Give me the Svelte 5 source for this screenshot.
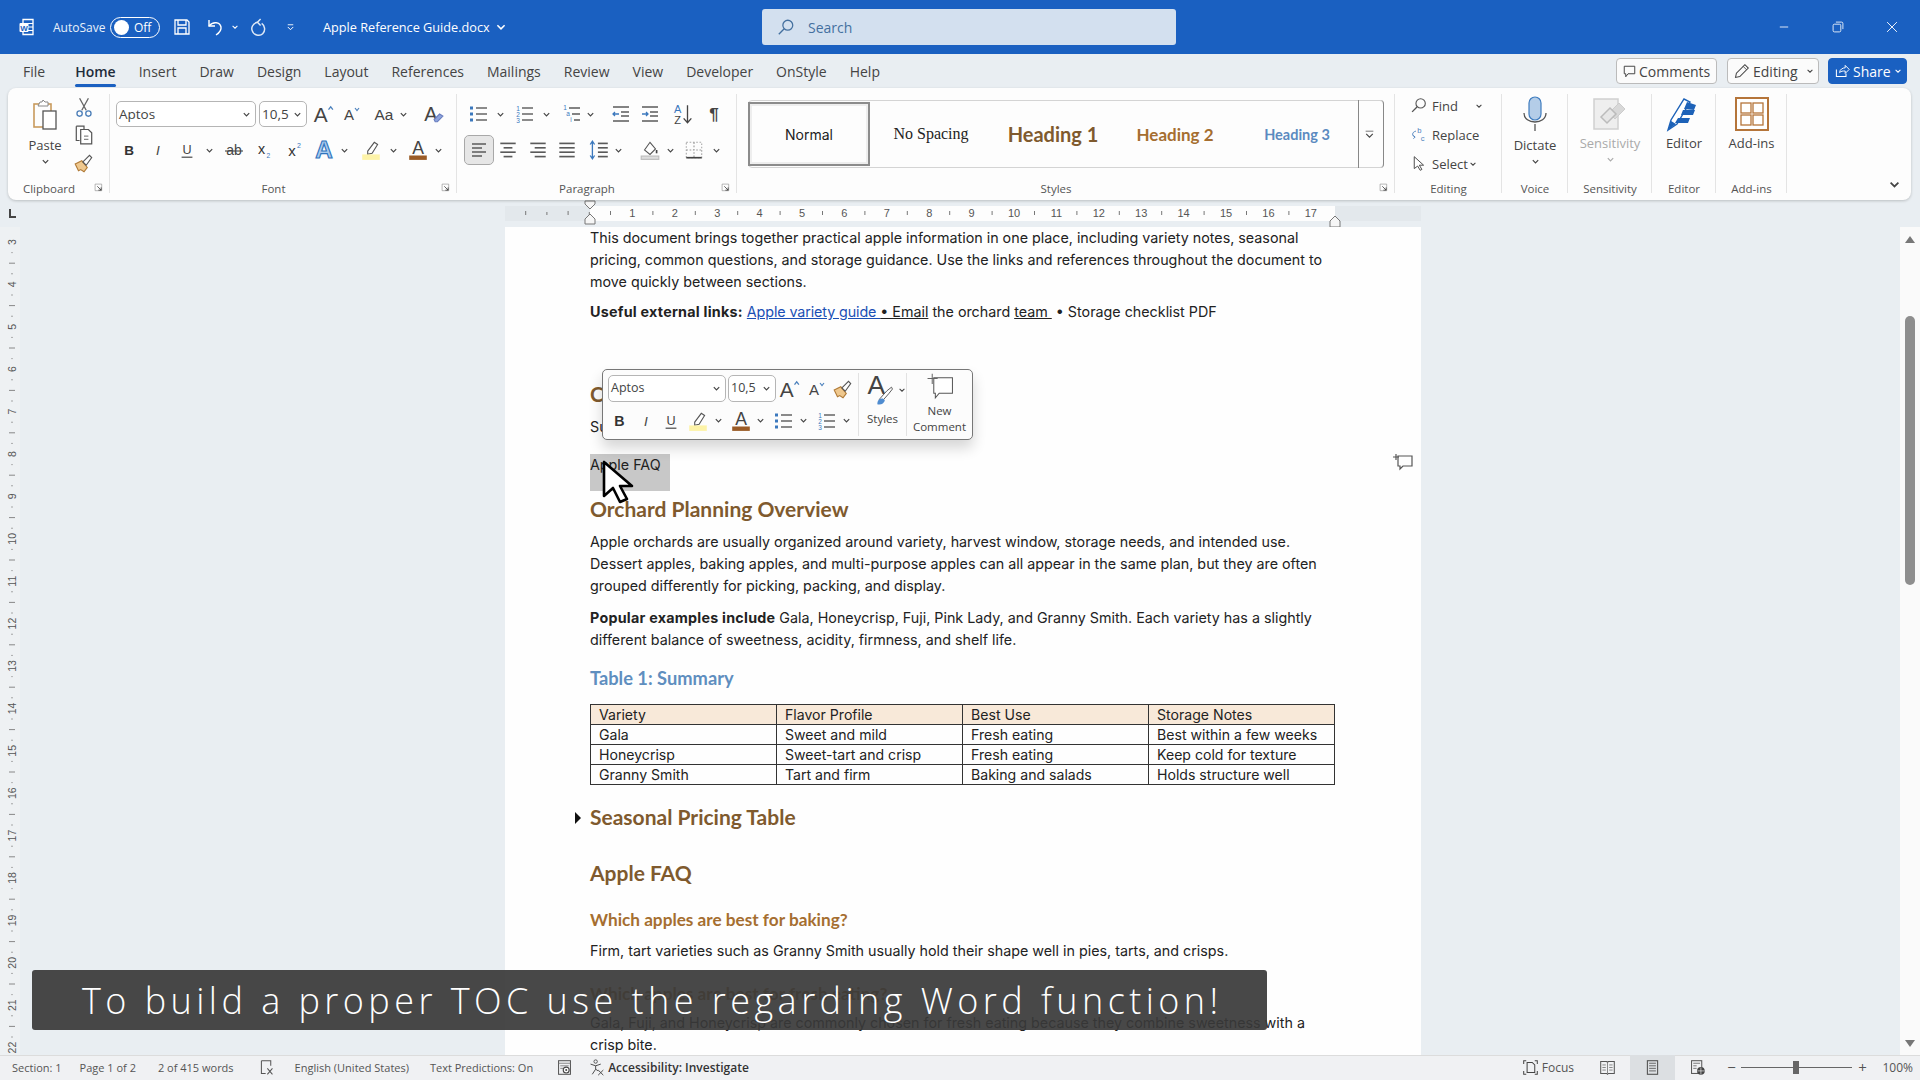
<script>
  const T = (s, x, y, size, fill = "#333", extra = "") =>
    `<text x="${x}" y="${y}" font-size="${size}" fill="${fill}" font-family="Liberation Sans, sans-serif" text-anchor="middle" ${extra}>${s}</text>`;
  const G = "#5a5a5a";
  const lines = (rows, color = G) =>
    rows.map(([a, y, b]) => `<path d="M${a} ${y}H${b}" stroke="${color}" stroke-width="1.5"/>`).join("");

  const icons = {
    chev: `<path d="M4 7l6 6 6-6" stroke="#444" stroke-width="2.6" fill="none"/>`,
    chevgray: `<path d="M4 7l6 6 6-6" stroke="#aaa" stroke-width="2.6" fill="none"/>`,
    chevw: `<path d="M4 7l6 6 6-6" stroke="#fff" stroke-width="2.6" fill="none"/>`,
    word: `<path d="M6 2.5h10v15H6z" fill="none" stroke="#fff" stroke-width="1.3"/><path d="M11 6.5h5M11 10h5M11 13.5h5" stroke="#fff"/><rect x="2.5" y="6" width="9" height="9" rx="1" fill="#fff"/>${T("W", 7, 13.5, 8, "#185fc0", 'font-weight="700"')}`,
    save: `<path d="M3 3h12l2 2v12H3z" fill="none" stroke="#fff" stroke-width="1.3"/><path d="M6 3v5h8V3M6 17v-6h8v6" fill="none" stroke="#fff" stroke-width="1.3"/>`,
    undo: `<path d="M4 3v6h6" fill="none" stroke="#fff" stroke-width="1.4"/><path d="M4 9c4-5 11-4 12 1 .5 3-2 6-5 8" fill="none" stroke="#fff" stroke-width="1.4"/>`,
    redo: `<path d="M12 2l-3 3 3 3" fill="none" stroke="#dfe9f6" stroke-width="1.4"/><path d="M9 5C4 6 3 11 4 13c1 4 7 6 10 3 3-3 2-8-1-10" fill="none" stroke="#dfe9f6" stroke-width="1.4"/>`,
    custom: `<path d="M5 5h10" stroke="#fff" stroke-width="1.6"/><path d="M5 9l5 5 5-5" fill="none" stroke="#fff" stroke-width="1.8"/>`,
    search: `<circle cx="12" cy="8" r="5.5" fill="none" stroke="#44709f" stroke-width="1.4"/><path d="M8 12l-6 6" stroke="#44709f" stroke-width="1.5"/>`,
    min: `<path d="M4 10h12" stroke="#fff" stroke-width="1.2"/>`,
    restore: `<rect x="3" y="6" width="11" height="11" rx="2" fill="none" stroke="#fff" stroke-width="1.2"/><path d="M7 3h8a2 2 0 0 1 2 2v8" fill="none" stroke="#fff" stroke-width="1.2"/>`,
    close: `<path d="M3 3l14 14M17 3L3 17" stroke="#fff" stroke-width="1.3"/>`,
    bubble: `<path d="M3 3h14v10H8l-3 4v-4H3z" fill="none" stroke="#444" stroke-width="1.3"/>`,
    pencil: `<path d="M3 17l1-5L14 2l4 4L8 16z" fill="none" stroke="#444" stroke-width="1.2"/><path d="M12 4l4 4" stroke="#444"/>`,
    share: `<path d="M3 8v9h12v-4" fill="none" stroke="#fff" stroke-width="1.3"/><path d="M7 12c0-4 4-6 7-6V3l5 5-5 5v-3c-3 0-5 0-7 2z" fill="none" stroke="#fff" stroke-width="1.2"/>`,
    paste: `<rect x="4" y="5" width="17" height="23" fill="none" stroke="#c89a5c" stroke-width="1.6"/><path d="M9 5l1-2h2l1-2 2 2 3 0v4H8z" fill="#fff" stroke="#888"/><rect x="13" y="12" width="13" height="18" fill="#fff" stroke="#555" stroke-width="1.3"/>`,
    cut: `<path d="M6 2l6 11M14 2L8 13" stroke="#666" stroke-width="1.2"/><circle cx="6" cy="16" r="2.4" fill="none" stroke="#4d7fb8" stroke-width="1.2"/><circle cx="14" cy="16" r="2.4" fill="none" stroke="#4d7fb8" stroke-width="1.2"/>`,
    copy: `<path d="M3 2h7v3M3 2v13h3" fill="none" stroke="#555" stroke-width="1.1"/><path d="M7 5h7l3 3v10H7z" fill="#fff" stroke="#555" stroke-width="1.1"/><path d="M10 11h4M10 14h4" stroke="#888"/>`,
    painter: `<path d="M2 11l6-3 5 6-3 4-3-2-2 1z" fill="#efc88e" stroke="#b07a36"/><path d="M9 9l6-6 2 2-5 7z" fill="#fff" stroke="#555"/>`,
    launch: `<path d="M2 2h12v12H2z" fill="none" stroke="#888" stroke-width="1.1"/><path d="M6 6l7 7M13 8v5H8" fill="none" stroke="#333" stroke-width="1.4"/>`,
    grow: T("A", 8, 17, 19, "#444") + `<path d="M15 6l2-2.5L19 6" fill="none" stroke="#4d82bd" stroke-width="1.2"/>`,
    shrink: T("A", 8, 16, 15, "#444") + `<path d="M14 4l2 2.5L18 4" fill="none" stroke="#4d82bd" stroke-width="1.2"/>`,
    aa: T("Aa", 10, 15, 14, "#444"),
    clear: T("A", 8, 16, 18, "#444") + `<path d="M11 15l5-5 3 2-5 5h-2z" fill="#8ea4dc" stroke="#6a7fc0"/>`,
    bold: T("B", 10, 16, 15, "#333", 'font-weight="700"'),
    italic: T("I", 10, 16, 15, "#444", 'font-style="italic"'),
    under: T("U", 10, 14, 14, "#444") + `<path d="M4 18h12" stroke="#444" stroke-width="1.3"/>`,
    strike: T("ab", 10, 15, 14, "#444") + `<path d="M1 11h18" stroke="#444" stroke-width="1.1"/>`,
    sub: T("x", 8, 14, 15, "#333") + T("2", 15, 18, 7, "#3b78bd"),
    sup: T("x", 8, 16, 15, "#333") + T("2", 15, 8, 7, "#3b78bd"),
    fx: T("A", 10, 17, 22, "#a9cbee", 'font-weight="700" stroke="#2f74bd" stroke-width="1"'),
    hl: `<path d="M7 11l6-8 3 2-5 8-4 1z" fill="#fff" stroke="#555"/><rect x="2" y="14" width="16" height="5" fill="#fdf3a8"/>`,
    color: T("A", 10, 14, 16, "#444") + `<rect x="2" y="15" width="16" height="4" fill="#9a5b26"/>`,
    bullets: [4, 10, 16].map((y) => `<rect x="2" y="${y - 1.5}" width="3" height="3" fill="#3b78bd"/><path d="M8 ${y}H19" stroke="${G}" stroke-width="1.4"/>`).join(""),
    nums: [4, 10, 16].map((y, i) => T(i + 1, 4, y + 2.5, 6.5, "#3b78bd") + `<path d="M8 ${y}H19" stroke="${G}" stroke-width="1.4"/>`).join(""),
    multi: T("1", 4, 6, 6.5, "#3b78bd") + T("a", 7, 12, 6.5, "#3b78bd") + T("i", 10, 18, 6.5, "#3b78bd") + lines([[8, 4, 19], [11, 10, 19], [13, 16, 19]]),
    outdent: lines([[2, 3, 18], [10, 8, 18], [10, 12, 18], [2, 17, 18]]) + `<path d="M8 10H2M4 8l-2 2 2 2" fill="none" stroke="#3b78bd" stroke-width="1.3"/>`,
    indent: lines([[2, 3, 18], [10, 8, 18], [10, 12, 18], [2, 17, 18]]) + `<path d="M2 10h6M6 8l2 2-2 2" fill="none" stroke="#3b78bd" stroke-width="1.3"/>`,
    sort: T("A", 6, 9, 10, "#3b78bd") + T("Z", 6, 19, 10, "#444") + `<path d="M15 2v16M11.500 14l3.500 4 3.500-4" fill="none" stroke="#444" stroke-width="1.2"/>`,
    pil: T("¶", 10, 16, 17, "#444", 'font-weight="700"'),
    al: lines([[3, 4, 17], [3, 8, 13], [3, 12, 17], [3, 16, 13]]),
    ac: lines([[3, 4, 17], [6, 8, 14], [3, 12, 17], [6, 16, 14]]),
    ar: lines([[3, 4, 17], [7, 8, 17], [3, 12, 17], [7, 16, 17]]),
    aj: lines([[3, 4, 17], [3, 8, 17], [3, 12, 17], [3, 16, 17]]),
    spacing: lines([[9, 4, 18], [9, 8, 18], [9, 12, 18], [9, 16, 18]]) + `<path d="M4 2v16M2 5l2-3 2 3M2 15l2 3 2-3" fill="none" stroke="#3b78bd" stroke-width="1.2"/>`,
    shade: `<path d="M5 10l5-7 5 6-5 5z" fill="#fff" stroke="#555"/><path d="M16 10v3" stroke="#444" stroke-width="1.5"/><rect x="2" y="15.500" width="16" height="3" fill="#ddd" stroke="#bbb"/>`,
    borders: `<rect x="3" y="3" width="14" height="14" fill="none" stroke="#aaa" stroke-dasharray="1.500 1.500"/><path d="M10 3v14M3 10h14" stroke="#999" stroke-dasharray="1.500 1.500"/><path d="M3 17h14" stroke="#444" stroke-width="1.5"/>`,
    up2: `<path d="M3 4h14" stroke="#444" stroke-width="1.3"/><path d="M4 9l6 6 6-6" fill="none" stroke="#444" stroke-width="2"/>`,
    find: `<circle cx="12.500" cy="7.500" r="5.500" fill="none" stroke="#555" stroke-width="1.3"/><path d="M8.500 11.500l-6 6" stroke="#555" stroke-width="1.600"/>`,
    replace: T("b", 11, 8, 9, "#4f82bd") + T("c", 15, 18, 9, "#4f82bd") + `<path d="M7 6C2 7 2 12 6 13M4 11l2 2-2 2" fill="none" stroke="#4f82bd" stroke-width="1.100"/>`,
    select: `<path d="M5 2v14l4-3 3 5 2-1-3-5h5z" fill="#fff" stroke="#444" stroke-width="1.100"/>`,
    mic: `<rect x="12" y="1" width="12" height="23" rx="6" fill="#b4cde8" stroke="#3f7cbf" stroke-width="1.200"/><path d="M7 17c0 12 22 12 22 0" fill="none" stroke="#555" stroke-width="1.300"/><path d="M18 28v7" stroke="#555" stroke-width="1.300"/>`,
    sens: `<rect x="2" y="3" width="24" height="30" fill="#eee" stroke="#d0d0d0" stroke-width="1.500"/><path d="M17 17l10-10 6 6-10 10z" fill="#d8d8d8" stroke="#ccc"/><path d="M9 21l9-9 6 6-9 9z" fill="#e6e6e6" stroke="#bbb" stroke-width="1.500"/>`,
    editor: `<path d="M2 34l3-10L18 3l6 3-13 22z" fill="#fff" stroke="#1d62b8" stroke-width="1.400"/><path d="M21 6l9 3-2 5-10-1zM17 14h12l-2 5H15zM12 22h12l-2 5H9z" fill="#1d62b8"/><path d="M2 34l3-9 5 3z" fill="#1d62b8"/>`,
    addins: `<rect x="2" y="2" width="32" height="32" fill="#fff" stroke="#b5753a" stroke-width="2"/><rect x="7" y="7" width="10" height="10" fill="none" stroke="#b5753a" stroke-width="1.300"/><rect x="19" y="7" width="10" height="10" fill="none" stroke="#b5753a" stroke-width="1.300"/><rect x="7" y="19" width="10" height="10" fill="none" stroke="#b5753a" stroke-width="1.300"/><rect x="19" y="19" width="10" height="10" fill="none" stroke="#b5753a" stroke-width="1.300"/>`,
    styles: T("A", 11, 22, 28, "#444") + `<path d="M14 28l8-9 5-4 1 2-4 5-7 8z" fill="#fff" stroke="#555"/><path d="M12 33c0-5 3-6 6-6l2 2c-1 3-4 5-8 4z" fill="#4f8cd0"/>`,
    newc: `<path d="M10 6h24v20H17l-5 6v-6h-2z" fill="#fff" stroke="#555" stroke-width="1.300"/><path d="M8 1v13M2 7h13" stroke="#666" stroke-width="1.300"/>`,
    sbook: `<path d="M2 3h7l1 1 1-1h7v14h-7l-1 1-1-1H2z" fill="none" stroke="#555" stroke-width="1.200"/><path d="M10 4v13M4 7h4M4 10h4M4 13h4M12 7h4M12 10h4M12 13h4" stroke="#777"/>`,
    sprint: `<rect x="4" y="2" width="12" height="16" fill="none" stroke="#555" stroke-width="1.300"/><path d="M6 5h8M6 8h8M6 11h8M6 14h8" stroke="#555"/>`,
    sweb: `<rect x="3" y="2" width="12" height="15" fill="none" stroke="#555" stroke-width="1.200"/><path d="M5 5h8M5 8h4M5 11h4" stroke="#666"/><circle cx="14" cy="14" r="4.500" fill="#444"/><path d="M10 14h8M14 10v8" stroke="#fff" stroke-width=".7"/>`,
    focus: `<path d="M2 6V2h3M15 2h3v4M18 14v4h-3M5 18H2v-4" fill="none" stroke="#444" stroke-width="1.200"/><path d="M6 4h6l3 3v9H6z" fill="none" stroke="#444" stroke-width="1.200"/>`,
    proof: `<path d="M4 2h11v6M4 2v15h5" fill="none" stroke="#555" stroke-width="1.200"/><path d="M11 11l6 7M17 11l-6 7" stroke="#555" stroke-width="1.200"/>`,
    macro: `<rect x="3" y="2" width="14" height="16" fill="none" stroke="#555" stroke-width="1.200"/><path d="M3 5h14M5 8h10M5 11h4" stroke="#777"/><circle cx="12" cy="13" r="3.500" fill="#fff" stroke="#444" stroke-width="1.300"/><circle cx="12" cy="13" r="1.200" fill="#444"/>`,
    access: `<circle cx="9" cy="3" r="2" fill="none" stroke="#444"/><path d="M3 6l6 2 6-2M9 8v4l-4 6M9 12l3 2" fill="none" stroke="#444" stroke-width="1.100"/><path d="M12 13l6 6M18 13l-6 6" stroke="#444" stroke-width="1.100"/>`,
    cmark: `<path d="M4 3h14v10H9l-3 3v-3H4z" fill="none" stroke="#555" stroke-width="1.200"/><path d="M2 1v6M-1 4h6" stroke="#555" stroke-width="1.200"/>`,
  };

  // lays icons out by centre x, as flow items with a left margin worked out from the previous one
  function place(start, list) {
    let x = start;
    return list.map(([ic, c, s, act]) => {
      const m = c - s / 2 - x;
      x = c + s / 2;
      return { ic, s, m, act };
    });
  }

  const fontTop = place(307, [["grow", 323, 22], ["shrink", 351, 20], ["aa", 384, 22], ["chev", 403, 9], ["clear", 433, 22]]);
  const fontBot = place(115, [["bold", 129, 18], ["italic", 158, 18], ["under", 187, 18], ["chev", 209, 9], ["strike", 234, 20], ["sub", 263, 19], ["sup", 294, 20], ["fx", 324, 22], ["chev", 344, 9], ["hl", 371, 22], ["chev", 393, 9], ["color", 418, 22], ["chev", 438, 9]]);
  const paraTop = place(457, [["bullets", 478, 20], ["chev", 500, 9], ["nums", 524, 20], ["chev", 546, 9], ["multi", 571, 20], ["chev", 590, 9], ["outdent", 621, 20], ["indent", 650, 20], ["sort", 682, 22], ["pil", 714, 20]]);
  const paraBot = place(457, [["al", 479, 28, true], ["ac", 508, 22], ["ar", 538, 22], ["aj", 567, 22], ["spacing", 599, 22], ["chev", 618, 9], ["shade", 650, 22], ["chev", 670, 9], ["borders", 694, 22], ["chev", 716, 9]]);
  const miniTop = place(776, [["grow", 789, 22], ["shrink", 816, 20], ["painter", 843, 22]]);
  const miniBot = place(608, [["bold", 619, 19], ["italic", 646, 18], ["under", 671, 18], ["hl", 698, 22], ["chev", 718, 9], ["color", 741, 22], ["chev", 760, 9], ["bullets", 783, 20], ["chev", 803, 9], ["nums", 826, 20], ["chev", 846, 9]]);
  const small = [["cut", 22], ["copy", 22], ["painter", 22]];

  const tabs = ["File", "Home", "Insert", "Draw", "Design", "Layout", "References", "Mailings", "Review", "View", "Developer", "OnStyle", "Help"];
  const gallery = [
    { name: "Normal", cls: "normal" },
    { name: "No Spacing", cls: "nospace" },
    { name: "Heading 1", cls: "h1s" },
    { name: "Heading 2", cls: "h2s" },
    { name: "Heading 3", cls: "h3s" },
  ];
  const rows = [
    ["Variety", "Flavor Profile", "Best Use", "Storage Notes"],
    ["Gala", "Sweet and mild", "Fresh eating", "Best within a few weeks"],
    ["Honeycrisp", "Sweet-tart and crisp", "Fresh eating", "Keep cold for texture"],
    ["Granny Smith", "Tart and firm", "Baking and salads", "Holds structure well"],
  ];

  const cm = 42.4;
  const hNums = Array.from({ length: 17 }, (_, i) => i + 1);
  const vNums = Array.from({ length: 22 }, (_, i) => i + 1).filter((n) => n >= 3);
</script>

{#snippet tools(list)}
  {#each list as t}
    <svg
      class="tool"
      class:active={t.act}
      style="margin-left:{t.m}px"
      width={t.s}
      height={t.s}
      viewBox={t.act ? "-4 -4 28 28" : "0 0 20 20"}>{@html icons[t.ic]}</svg>
  {/each}
{/snippet}

{#snippet icon(name, w, h = w, box = "0 0 20 20")}
  <svg class="icon" width={w} height={h} viewBox={box}>{@html icons[name]}</svg>
{/snippet}

{#snippet combo(cls, text)}
  <div class="combo {cls}"><span>{text}</span>{@render icon("chev", 9)}</div>
{/snippet}

{#snippet label(text, launcher = true)}
  <div class="glabel"><span>{text}</span>{#if launcher}{@render icon("launch", 11)}{/if}</div>
{/snippet}

<div class="app">
  <header class="titlebar">
    <div class="word">{@render icon("word", 20)}</div>
    <span class="autosave">AutoSave</span>
    <div class="toggle"><i></i><span>Off</span></div>
    <div class="qat">
      {@render icon("save", 20)}
      {@render icon("undo", 20)}
      {@render icon("chevw", 8)}
      {@render icon("redo", 21)}
      {@render icon("custom", 11)}
    </div>
    <div class="docname">Apple Reference Guide.docx {@render icon("chevw", 12)}</div>
    <div class="search">{@render icon("search", 18)}<span>Search</span></div>
    <div class="winctl">
      {@render icon("min", 14)}
      {@render icon("restore", 14)}
      {@render icon("close", 14)}
    </div>
  </header>

  <nav class="tabs">
    {#each tabs as tab}
      <span class="tab" class:current={tab === "Home"}>{tab}</span>
    {/each}
    <div class="actions">
      <div class="pill comments">{@render icon("bubble", 15)}Comments</div>
      <div class="pill editing">{@render icon("pencil", 17)}Editing{@render icon("chev", 8)}</div>
      <div class="pill share">{@render icon("share", 16)}Share{@render icon("chevw", 8)}</div>
    </div>
  </nav>

  <section class="ribbon">
    <div class="group clipboard">
      <div class="gbody cliprow">
        <div class="paste">
          {@render icon("paste", 30, 34, "0 0 30 32")}
          <span>Paste</span>
          {@render icon("chev", 9)}
        </div>
        <div class="smallcol">
          {#each small as [n, s]}{@render icon(n, s)}{/each}
        </div>
      </div>
      {@render label("Clipboard")}
    </div>

    <div class="group font">
      <div class="gbody">
        <div class="row">
          {@render combo("fname", "Aptos")}
          {@render combo("fsize", "10,5")}
          {@render tools(fontTop)}
        </div>
        <div class="row">{@render tools(fontBot)}</div>
      </div>
      {@render label("Font")}
    </div>

    <div class="group para">
      <div class="gbody">
        <div class="row nopad">{@render tools(paraTop)}</div>
        <div class="row nopad">{@render tools(paraBot)}</div>
      </div>
      {@render label("Paragraph")}
    </div>

    <div class="group stylesg">
      <div class="gbody">
        <div class="gallery">
          {#each gallery as g}
            <div class="gitem {g.cls}">{g.name}</div>
          {/each}
          <div class="gmore">{@render icon("up2", 11)}</div>
        </div>
      </div>
      {@render label("Styles")}
    </div>

    <div class="group editing-g">
      <div class="gbody editrows">
        <div class="erow">{@render icon("find", 17)}<span>Find</span><em class="c1">{@render icon("chev", 8)}</em></div>
        <div class="erow">{@render icon("replace", 17)}<span>Replace</span></div>
        <div class="erow">{@render icon("select", 17)}<span>Select</span><em>{@render icon("chev", 8)}</em></div>
      </div>
      {@render label("Editing", false)}
    </div>

    <div class="group big g-voice">
      <div class="gbody bigbody">
        {@render icon("mic", 36, 36, "0 0 36 36")}
        <span>Dictate</span>
        {@render icon("chev", 9)}
      </div>
      {@render label("Voice", false)}
    </div>

    <div class="group big g-sens">
      <div class="gbody bigbody off tight">
        {@render icon("sens", 36, 36, "0 0 36 36")}
        <span>Sensitivity</span>
        {@render icon("chevgray", 9)}
      </div>
      {@render label("Sensitivity", false)}
    </div>

    <div class="group big g-editor">
      <div class="gbody bigbody tight">
        {@render icon("editor", 36, 36, "0 0 36 36")}
        <span>Editor</span>
      </div>
      {@render label("Editor", false)}
    </div>

    <div class="group big g-add">
      <div class="gbody bigbody tight">
        {@render icon("addins", 36, 36, "0 0 36 36")}
        <span>Add-ins</span>
      </div>
      {@render label("Add-ins", false)}
    </div>

    <div class="collapse">{@render icon("chev", 13)}</div>
  </section>

  <div class="rulerbar">
    <svg width="1920" height="27" viewBox="0 0 1920 27">
      <path d="M10 9v8h6" fill="none" stroke="#444" stroke-width="2" />
      <rect x="505" y="6" width="916" height="15" fill="#e3e8ec" />
      <rect x="590" y="6" width="745" height="15" fill="#fdfdfd" />
      {#each Array(37) as _, i}
        {@const x = 505 + (i * cm) / 2 - 0.5}
        <path d="M{x + 21.200} {i % 2 ? 12 : 11}v{i % 2 ? 3 : 4}" stroke="#777" />
      {/each}
      {#each hNums as n}
        <rect x={590 + n * cm - 6} y="7" width="12" height="13" fill="#fdfdfd" />
        <text x={590 + n * cm} y="17" font-size="11" text-anchor="middle" fill="#555" font-family="Liberation Sans, sans-serif">{n}</text>
      {/each}
      <path d="M585 1h10v3l-5 5-5-5zM585 24v-5l5-5 5 5v5z" fill="#f6f6f6" stroke="#777" />
      <path d="M1330 21l5-5 5 5v6h-10z" fill="#f6f6f6" stroke="#777" />
    </svg>
  </div>

  <div class="workspace">
    <aside class="vruler">
      <svg width="20" height="828" viewBox="0 0 20 828">
        {#each vNums as n}
          <text x="0" y="0" transform="translate(16 {242 + (n - 3) * cm - 227}) rotate(-90)" font-size="10.500" text-anchor="middle" fill="#555" font-family="Liberation Sans, sans-serif">{n}</text>
          <path d="M9 {242 + (n - 3) * cm - 227 + cm / 2}h6" stroke="#888" />
          <circle cx="12" cy={242 + (n - 3) * cm - 227 + cm / 4} r=".7" fill="#888" />
          <circle cx="12" cy={242 + (n - 3) * cm - 227 + (3 * cm) / 4} r=".7" fill="#888" />
        {/each}
      </svg>
    </aside>

    <main class="canvas">
      <article class="page">
        <p>This document brings together practical apple information in one place, including variety notes, seasonal pricing, common questions, and storage guidance. Use the links and references throughout the document to move quickly between sections.</p>
        <p class="links"><b>Useful external links:</b> <a href="#guide">Apple variety guide&nbsp;</a><u>•&nbsp;Email</u> the orchard <u>team&nbsp;</u> •&nbsp;Storage checklist PDF</p>
        <h2 class="contents">Contents</h2>
        <p class="toc">Summary Table</p>
        <p class="toc sel"><mark>Apple FAQ</mark></p>
        <h2 class="orchard">Orchard Planning Overview</h2>
        <p>Apple orchards are usually organized around variety, harvest window, storage needs, and intended use. Dessert apples, baking apples, and multi-purpose apples can all appear in the same plan, but they are often grouped differently for picking, packing, and display.</p>
        <p class="pop"><b>Popular examples include</b> Gala, Honeycrisp, Fuji, Pink Lady, and Granny Smith. Each variety has a slightly different balance of sweetness, acidity, firmness, and shelf life.</p>
        <h4 class="tblh">Table 1: Summary</h4>
        <table>
          <tbody>
            {#each rows as r, i}
              <tr class:head={i === 0}>
                {#each r as c}<td>{c}</td>{/each}
              </tr>
            {/each}
          </tbody>
        </table>
        <h2 class="pricing">Seasonal Pricing Table</h2>
        <h2 class="faq">Apple FAQ</h2>
        <h3 class="q1">Which apples are best for baking?</h3>
        <p class="a1">Firm, tart varieties such as Granny Smith usually hold their shape well in pies, tarts, and crisps.</p>
        <h3 class="q2">Which apples are best for fresh eating?</h3>
        <p class="a2">Gala, Fuji, and Honeycrisp are commonly chosen for fresh eating because they combine sweetness with a crisp bite.</p>

        <div class="mini">
          <div class="minileft">
            <div class="minirow">
              {@render combo("mname", "Aptos")}
              {@render combo("msize", "10,5")}
              {@render tools(miniTop)}
            </div>
            <div class="minirow second">{@render tools(miniBot)}</div>
          </div>
          <div class="ministyles">
            <div class="msrow">{@render icon("styles", 34, 34, "0 0 36 36")}{@render icon("chev", 8)}</div>
            <span>Styles</span>
          </div>
          <div class="minicomment">
            {@render icon("newc", 28, 28, "0 0 36 36")}
            <span>New<br />Comment</span>
          </div>
        </div>

        <svg class="fold" width="8" height="14" viewBox="0 0 8 14"><path d="M1 1l6 6-6 6z" fill="#111" /></svg>
        <svg class="cmark" width="22" height="20" viewBox="-2 0 22 20">{@html icons.cmark}</svg>
      </article>
      <svg class="cursor" width="34" height="44" viewBox="0 0 34 44">
        <path d="M2 2v34l9-8 7 14 7-3-7-13h12z" fill="#fff" stroke="#000" stroke-width="2.600" stroke-linejoin="round" />
      </svg>
    </main>

    <aside class="scroll">
      <svg width="10" height="8" viewBox="0 0 10 8"><path d="M0 8l5-7 5 7z" fill="#777" /></svg>
      <div class="thumb"></div>
      <svg class="down" width="10" height="8" viewBox="0 0 10 8"><path d="M0 0l5 7 5-7z" fill="#777" /></svg>
    </aside>
  </div>

  <footer class="status">
    <span>Section: 1</span>
    <span class="pg">Page 1 of 2</span>
    <span class="wd">2 of 415 words</span>
    <span class="si">{@render icon("proof", 17)}</span>
    <span class="lang">English (United States)</span>
    <span class="pred">Text Predictions: On</span>
    <span class="si2">{@render icon("macro", 17)}</span>
    <span class="acc">{@render icon("access", 17)}<b>Accessibility: Investigate</b></span>
    <div class="sright">
      <span class="fo">{@render icon("focus", 17)}Focus</span>
      <span class="view">{@render icon("sbook", 17)}</span>
      <span class="view on">{@render icon("sprint", 17)}</span>
      <span class="view">{@render icon("sweb", 17)}</span>
      <span class="zbtn">−</span>
      <div class="slider"><i></i></div>
      <span class="zbtn">+</span>
      <span class="pct">100%</span>
    </div>
  </footer>

  <div class="caption">To build a proper TOC use the regarding Word function!</div>
</div>

<style>
  :global(body) {
    margin: 0;
    background: #e9eef2;
  }

  .app {
    position: relative;
    width: 1920px;
    height: 1080px;
    overflow: hidden;
    display: flex;
    flex-direction: column;
    background: #e9eef2;
    font-family: "Open Sans", sans-serif;
    color: #444;
  }

  svg {
    display: block;
    flex: none;
  }

  .titlebar {
    height: 54px;
    flex: none;
    display: flex;
    align-items: center;
    background: #1a60c1;
    color: #fff;
    font-size: 12px;
  }
  .word {
    margin-left: 17px;
  }
  .autosave {
    margin-left: 16px;
    width: 57px;
    color: #e8f0fa;
  }
  .toggle {
    width: 50px;
    height: 21px;
    box-sizing: border-box;
    border: 1px solid #fff;
    border-radius: 11px;
    display: flex;
    align-items: center;
    gap: 5px;
    padding-left: 3px;
  }
  .toggle i {
    width: 15px;
    height: 15px;
    border-radius: 50%;
    background: #fff;
  }
  .qat {
    display: flex;
    align-items: center;
    margin-left: 12px;
    gap: 13px;
  }
  .qat :global(svg:nth-child(3)) {
    margin-left: -7px;
  }
  .qat :global(svg:nth-child(4)) {
    margin-left: -4px;
  }
  .qat :global(svg:nth-child(5)) {
    margin-left: 3px;
  }
  .docname {
    margin-left: 27px;
    width: 440px;
    font-size: 12.7px;
    display: flex;
    align-items: center;
    gap: 5px;
    white-space: nowrap;
  }
  .search {
    position: absolute;
    left: 762px;
    top: 9px;
    width: 414px;
    height: 36px;
    box-sizing: border-box;
    background: #d3e0ef;
    border-radius: 3px;
    display: flex;
    align-items: center;
    padding-left: 15px;
    gap: 13px;
    color: #44709f;
    font-size: 14px;
  }
  .winctl {
    margin-left: auto;
    display: flex;
    gap: 40px;
    margin-right: 21px;
  }

  .tabs {
    height: 34px;
    flex: none;
    box-sizing: border-box;
    padding-top: 2px;
    display: flex;
    align-items: center;
    padding-left: 23px;
    gap: 23px;
    font-size: 14px;
    color: #444;
  }
  .tab {
    position: relative;
    line-height: 22px;
  }
  .tab:first-child {
    margin-right: 7px;
  }
  .tab.current {
    font-weight: 600;
    color: #1d2b3a;
  }
  .tab.current::after {
    content: "";
    position: absolute;
    left: 0;
    right: 0;
    bottom: -4px;
    height: 3px;
    background: #1a60c1;
    border-radius: 2px;
  }
  .actions {
    margin-left: auto;
    margin-right: 13px;
    margin-top: -2px;
    display: flex;
    gap: 10px;
  }
  .pill {
    height: 26px;
    box-sizing: border-box;
    border: 1px solid #bbb;
    border-radius: 4px;
    background: #fbfbfb;
    display: flex;
    align-items: center;
    gap: 3px;
    font-size: 14px;
    color: #444;
    padding: 0 5px;
  }
  .comments {
    width: 101px;
    padding-left: 5px;
    gap: 2px;
    margin-left: -1px;
  }
  .editing {
    width: 92px;
  }
  .editing :global(svg:last-child) {
    margin-left: 5px;
  }
  .share {
    width: 79px;
    background: #1a60c1;
    border-color: #1a60c1;
    color: #fff;
    margin-left: -1px;
  }

  .ribbon {
    position: relative;
    height: 112px;
    flex: none;
    margin: 0 9px 0 8px;
    background: #fdfdfd;
    border-radius: 8px;
    box-shadow: 0 1px 3px rgba(0, 0, 0, 0.2);
    display: flex;
  }
  .group {
    position: relative;
    display: flex;
    flex-direction: column;
    box-sizing: border-box;
    height: 100%;
    padding-top: 12px;
  }
  .group::after {
    content: "";
    position: absolute;
    right: 0;
    top: 6px;
    bottom: 7px;
    width: 1px;
    background: #e4e4e4;
  }
  .gbody {
    height: 74px;
    flex: none;
  }
  .glabel {
    flex: none;
    height: 26px;
    display: flex;
    align-items: center;
    font-size: 11.5px;
    color: #555;
    padding-top: 1px;
  }
  .glabel span {
    flex: 1;
    text-align: center;
  }
  .glabel :global(svg) {
    width: 11px;
    margin: 0 5px 0 4px;
  }
  .clipboard {
    width: 102px;
  }
  .font {
    width: 347px;
  }
  .para {
    width: 280px;
  }
  .stylesg {
    width: 658px;
  }
  .editing-g {
    width: 107px;
  }
  .g-voice {
    width: 66px;
  }
  .g-sens {
    width: 84px;
  }
  .g-editor {
    width: 64px;
  }
  .g-add {
    width: 71px;
  }

  .cliprow {
    display: flex;
  }
  .paste {
    width: 74px;
    margin-top: -2px;
    display: flex;
    flex-direction: column;
    align-items: center;
    font-size: 13px;
  }
  .paste span {
    margin-top: 4px;
    line-height: 18px;
  }
  .paste :global(svg:last-child) {
    margin-top: 3px;
  }
  .smallcol {
    display: flex;
    flex-direction: column;
    gap: 6px;
    margin-left: -9px;
    margin-top: -4px;
  }

  .row {
    display: flex;
    align-items: center;
    height: 28px;
    padding-left: 6px;
    box-sizing: border-box;
  }
  .row + .row {
    margin-top: 8px;
    padding-left: 5px;
  }
  .row.nopad {
    padding-left: 0;
  }
  .active {
    background: #e6e6e6;
    outline: 1px solid #a8a8a8;
    border-radius: 4px;
  }
  .combo {
    height: 26px;
    box-sizing: border-box;
    background: #fff;
    border: 1px solid #b5b5b5;
    border-radius: 5px;
    display: flex;
    align-items: center;
    justify-content: space-between;
    padding: 0 4px 0 2px;
    font-size: 13.5px;
    color: #444;
    font-family: "Open Sans", sans-serif;
  }
  .fname {
    width: 140px;
  }
  .fsize {
    width: 48px;
    margin-left: 3px;
  }

  .gallery {
    display: flex;
    box-sizing: border-box;
    margin: 0 0 0 11px;
    width: 636px;
    height: 68px;
    border: 1px solid #d4d4d4;
    border-radius: 4px;
  }
  .gitem {
    width: 122px;
    flex: none;
    display: flex;
    align-items: center;
    justify-content: center;
    box-sizing: border-box;
    color: #222;
  }
  .normal {
    border: 2px solid #8c8c8c;
    box-shadow: inset 0 0 0 2px #eee;
    font-family: Inter, sans-serif;
    font-size: 14px;
    margin: 1px 0 1px -1px;
  }
  .nospace {
    font-family: "Liberation Serif", serif;
    font-size: 16px;
  }
  .h1s {
    font-family: Lato, sans-serif;
    font-size: 20px;
    font-weight: 700;
    color: #7f5a2e;
  }
  .h2s {
    font-family: Lato, sans-serif;
    font-size: 17px;
    font-weight: 700;
    color: #a56e30;
  }
  .h3s {
    font-family: Lato, sans-serif;
    font-size: 14.5px;
    font-weight: 700;
    color: #5b8ac0;
  }
  .gmore {
    flex: 1;
    border-left: 1px solid #888;
    border-right: 1px solid #888;
    margin: -1px -1px -1px 0;
    border-radius: 0 4px 4px 0;
    display: flex;
    align-items: center;
    justify-content: center;
    padding-right: 4px;
  }

  .editrows {
    margin-top: -9px;
    margin-bottom: 9px;
    padding-left: 15px;
  }
  .erow {
    display: flex;
    align-items: center;
    height: 29px;
    gap: 5px;
    font-size: 13px;
    color: #444;
  }
  .erow em {
    margin-left: -4px;
  }
  .erow em.c1 {
    margin-left: 12px;
  }

  .bigbody {
    display: flex;
    flex-direction: column;
    align-items: center;
    margin-top: -4px;
    margin-bottom: 4px;
    font-size: 13px;
    color: #444;
  }
  .bigbody span {
    line-height: 18px;
    margin-top: 4px;
  }
  .bigbody.tight span {
    margin-top: 2px;
  }
  .bigbody :global(svg:last-child:not(:first-child)) {
    margin-top: 3px;
  }
  .bigbody.off {
    color: #aaa;
  }
  .collapse {
    position: absolute;
    right: 10px;
    bottom: 9px;
  }

  .rulerbar {
    height: 27px;
    flex: none;
  }

  .workspace {
    flex: 1;
    min-height: 0;
    display: flex;
  }
  .vruler {
    width: 20px;
    flex: none;
    background: #eef1f3;
    overflow: hidden;
  }
  .canvas {
    position: relative;
    flex: 1;
    min-width: 0;
    overflow: hidden;
  }
  .page {
    position: relative;
    box-sizing: border-box;
    width: 916px;
    margin-left: 485px;
    height: 100%;
    padding: 0 86px 0 85px;
    background: #fefefe;
    font-family: Inter, sans-serif;
    font-size: 14.3px;
    line-height: 22px;
    color: #222;
    overflow: visible;
  }
  .page p {
    margin: 0;
  }
  .page b {
    letter-spacing: 0.25px;
  }
  .links {
    margin-top: 8px !important;
  }
  .links a {
    color: #1a4fb5;
    letter-spacing: -0.1px;
  }
  .page h2,
  .page h3,
  .page h4 {
    margin: 0;
    font-family: Lato, sans-serif;
    font-weight: 700;
    line-height: 26px;
  }
  .page h2 {
    font-size: 21px;
    color: #7f5a2e;
  }
  .contents {
    margin-top: 58px !important;
  }
  .toc {
    margin-top: 9px !important;
  }
  .toc.sel {
    margin-top: 16px !important;
    height: 37px;
  }
  mark {
    display: inline-block;
    width: 80px;
    height: 37px;
    background: #c8c8c8;
    color: #222;
  }
  .orchard {
    margin-top: 5px !important;
    margin-bottom: 9px !important;
  }
  .pop {
    margin-top: 10px !important;
  }
  .tblh {
    font-size: 18.3px;
    color: #5f8ebf;
    margin-top: 14px !important;
    margin-bottom: 13px !important;
  }
  table {
    width: 745px;
    border-collapse: collapse;
    table-layout: fixed;
    font-size: 14.1px;
    line-height: 19px;
  }
  td {
    border: 1px solid #333;
    padding: 0 0 0 8px;
    height: 19px;
    white-space: nowrap;
  }
  .head td {
    background: #f8e9d9;
  }
  .pricing {
    margin-top: 19px !important;
  }
  .faq {
    margin-top: 30px !important;
  }
  .page h3 {
    font-size: 17.2px;
    color: #a56e30;
  }
  .q1 {
    margin-top: 21px !important;
  }
  .a1 {
    margin-top: 7px !important;
  }
  .q2 {
    margin-top: 19px !important;
  }
  .a2 {
    margin-top: 5px !important;
  }

  .mini {
    position: absolute;
    left: 97px;
    top: 142px;
    width: 371px;
    height: 71px;
    box-sizing: border-box;
    background: #fcfcfc;
    border: 1px solid #777;
    border-radius: 5px;
    box-shadow: 0 8px 14px rgba(0, 0, 0, 0.16);
    display: flex;
    font-family: "Open Sans", sans-serif;
    color: #444;
    line-height: 1;
  }
  .minileft {
    width: 255px;
    padding: 5px 0 0 5px;
    box-sizing: border-box;
    flex: none;
  }
  .minirow {
    display: flex;
    align-items: center;
    height: 27px;
  }
  .minirow.second {
    margin-top: 5px;
  }
  .mname {
    width: 118px;
    height: 27px;
    font-size: 12.5px;
  }
  .msize {
    width: 48px;
    height: 27px;
    margin-left: 2px;
    font-size: 12.5px;
  }
  .ministyles {
    width: 47px;
    border-left: 1px solid #e2e2e2;
    border-right: 1px solid #e2e2e2;
    margin: 3px 0;
    flex: none;
    display: flex;
    flex-direction: column;
    align-items: center;
    font-size: 11.5px;
  }
  .msrow {
    display: flex;
    align-items: center;
    margin: 0 0 6px 6px;
  }
  .msrow :global(svg:last-child) {
    margin-left: -2px;
  }
  .minicomment {
    flex: 1;
    display: flex;
    flex-direction: column;
    align-items: center;
    font-size: 11.5px;
    text-align: center;
    line-height: 16px;
    padding-top: 3px;
  }
  .minicomment span {
    margin-top: 2px;
  }

  .fold {
    position: absolute;
    left: 69px;
    top: 584px;
  }
  .cmark {
    position: absolute;
    left: 887px;
    top: 226px;
  }
  .cursor {
    position: absolute;
    left: 582px;
    top: 233px;
  }

  .scroll {
    width: 20px;
    flex: none;
    background: #fafafa;
    display: flex;
    flex-direction: column;
    align-items: center;
    padding: 8px 0 7px;
    box-sizing: border-box;
  }
  .thumb {
    width: 10px;
    height: 269px;
    margin-top: 73px;
    background: #8e8e8e;
    border-radius: 5px;
  }
  .down {
    margin-top: auto;
  }

  .status {
    position: relative;
    height: 25px;
    flex: none;
    display: flex;
    align-items: center;
    padding: 0 0 2px 12px;
    gap: 20px;
    background: #f0f1f3;
    border-top: 1px solid #dcdcdc;
    box-sizing: border-box;
    font-size: 11px;
    color: #555;
    white-space: nowrap;
  }
  .pg {
    margin-left: -2px;
  }
  .wd {
    margin-left: 2px;
  }
  .si {
    margin-left: 4px;
  }
  .pred {
    margin-left: 1px;
  }
  .si2 {
    margin-left: 3px;
  }
  .acc {
    display: flex;
    align-items: center;
    gap: 3px;
    margin-left: -5px;
  }
  .acc b {
    font-weight: 600;
    font-size: 12px;
    color: #333;
  }
  .sright {
    margin-left: auto;
    display: flex;
    align-items: center;
    height: 100%;
  }
  .fo {
    display: flex;
    align-items: center;
    gap: 3px;
    margin-right: 11px;
    font-size: 12px;
  }
  .view {
    width: 45px;
    height: 25px;
    display: flex;
    align-items: center;
    justify-content: center;
  }
  .view.on {
    background: #dcdfe2;
  }
  .zbtn {
    font-size: 15px;
    width: 16px;
    text-align: center;
  }
  .view + .zbtn {
    margin-left: 3.5px;
  }
  .slider {
    position: relative;
    width: 111px;
    height: 1px;
    background: #666;
    margin: 0 2px;
  }
  .slider i {
    position: absolute;
    left: 52px;
    top: -6px;
    width: 6px;
    height: 13px;
    background: #666;
  }
  .pct {
    margin: 0 7px 0 12px;
    font-size: 12px;
  }

  .caption {
    position: absolute;
    left: 32px;
    top: 970px;
    width: 1235px;
    height: 60px;
    box-sizing: border-box;
    padding-left: 50px;
    background: rgba(56, 56, 56, 0.92);
    border-radius: 3px;
    color: #fff;
    font-family: "Open Sans", sans-serif;
    font-weight: 300;
    font-size: 36px;
    letter-spacing: 4.45px;
    line-height: 62px;
    white-space: nowrap;
  }
</style>
